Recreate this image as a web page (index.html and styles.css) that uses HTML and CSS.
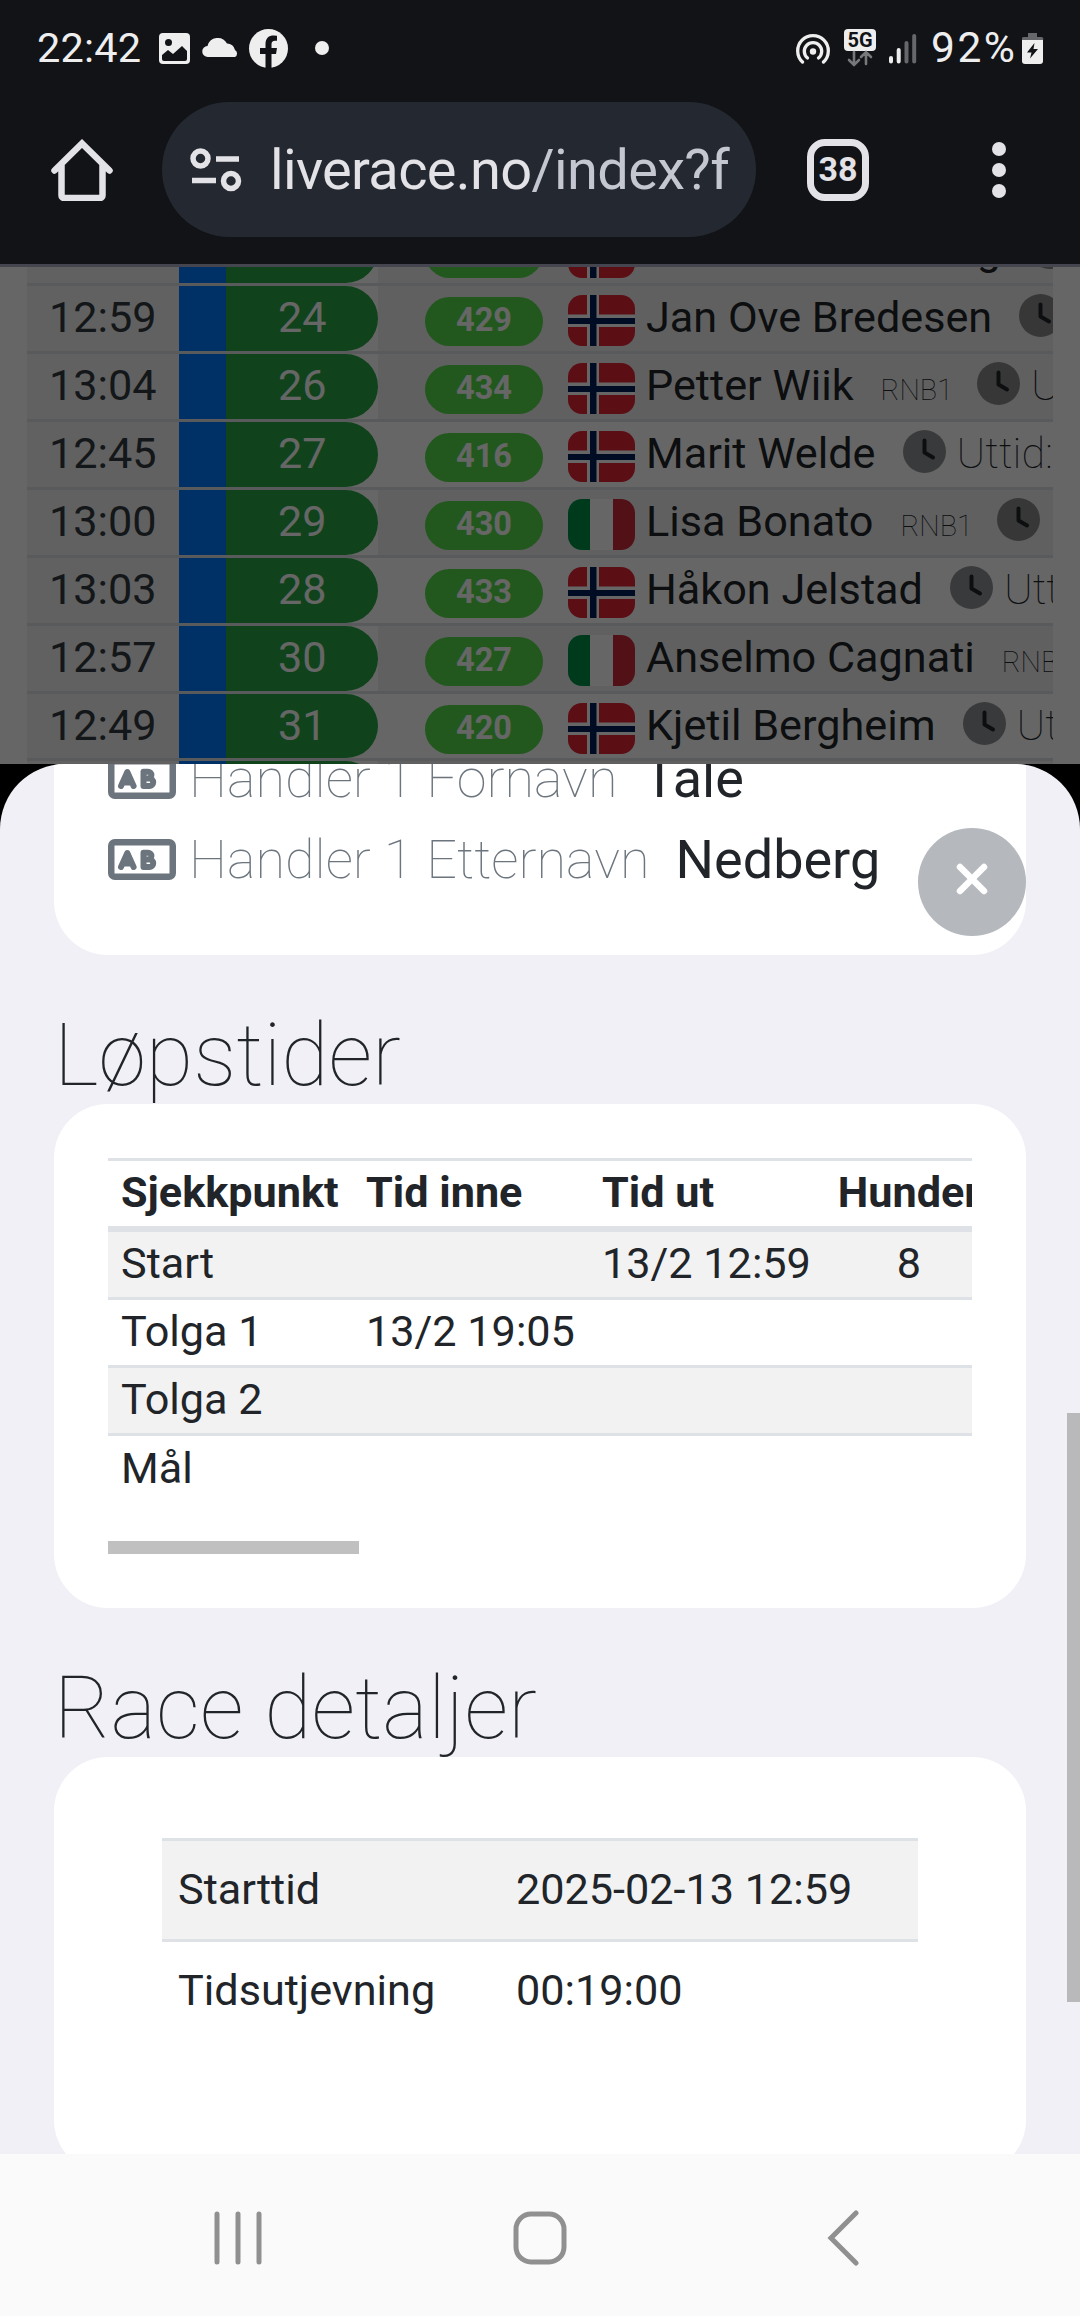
FILE: index.html
```html
<!DOCTYPE html>
<html lang="no">

<head>
    <meta charset="UTF-8">
    <meta name="viewport" content="width=device-width, initial-scale=1.0">
    <title>liverace.no</title>
    <link rel="stylesheet" href="styles.css">
</head>

<body>
    <!-- shared symbols -->
    <svg class="defs" width="0" height="0">
        <symbol id="no" viewBox="0 0 67 51">
            <path fill="#e32636" d="M0 0h67v51H0z" />
            <path fill="#fff" d="M19 0h12v51H19zM0 19.500h67v12.500H0z" />
            <path fill="#00205b" d="M22 0h6.500v51H22zM0 23h67v6H0z" />
        </symbol>
        <symbol id="it" viewBox="0 0 67 51">
            <path fill="#fff" d="M0 0h67v51H0z" />
            <path fill="#009246" d="M0 0h22v51H0z" />
            <path fill="#ce2b37" d="M45 0h22v51H45z" />
        </symbol>
        <symbol id="clock" viewBox="0 0 43 43">
            <circle cx="21.500" cy="21.500" r="21.500" fill="#212529" fill-opacity=".5" />
            <path d="M21.500 10.500V22.500L30 27.500" fill="none" stroke="#212529" stroke-width="4" stroke-linecap="round" stroke-linejoin="round" />
        </symbol>
        <symbol id="ab" viewBox="0 0 68 41">
            <rect x="3.250" y="3.250" width="61.500" height="34.500" rx="3.500" fill="none" stroke="#6c757d" stroke-width="6.500" />
            <path d="M13 28L19.300 14L25.600 28M15.500 24.500h8" fill="none" stroke="#6c757d" stroke-width="6" stroke-linecap="round" stroke-linejoin="round" />
            <path d="M35.500 13.700h4.500a3.300 3.300 0 0 1 0 6.800H35.500zM35.500 20.500h6a3.700 3.700 0 0 1 0 7.400H35.500z" fill="none" stroke="#6c757d" stroke-width="6" stroke-linejoin="round" />
        </symbol>
    </svg>

    <header class="browser">
        <div class="status">
            <span class="clock">22:42</span>
            <svg class="status-left" width="180" height="42" viewBox="0 0 180 42">
                <rect x="9" y="6" width="31" height="31" rx="4" fill="#eee" />
                <circle cx="18.500" cy="15.500" r="3.500" fill="#121317" />
                <path d="M12 28l6-5 5 4 9-8 5 5v8a2 2 0 0 1-2 2H14a2 2 0 0 1-2-2z" fill="#121317" />
                <path d="M58 30a5.500 5.500 0 0 1-.5-11 10.500 10.500 0 0 1 19.500-2.500 8 8 0 0 1 8 6.500 4 4 0 0 1 0 7z" fill="#eee" />
                <circle cx="118.500" cy="21.500" r="19.500" fill="#eee" />
                <path d="M115.500 42V27h-5.500v-6h5.500v-4c0-6 3.500-8.500 8-8.500l3.500.3v5h-2c-2.500 0-3.500 1.300-3.500 3.500V21h5.500l-1 6h-4.500v15z" fill="#121317" />
                <circle cx="172" cy="21" r="7" fill="#eee" />
            </svg>
            <svg class="status-right" width="130" height="42" viewBox="0 0 130 42">
                <g fill="none" stroke="#eee" stroke-width="3.300" stroke-linecap="round">
                    <path d="M6.500 35a15.300 15.300 0 1 1 21 0" />
                    <path d="M11.500 31a8.700 8.700 0 1 1 11 0" />
                </g>
                <circle cx="17" cy="24.500" r="3.200" fill="#eee" />
                <rect x="48" y="2" width="32" height="22" rx="4" fill="#eee" />
                <text class="net" x="64" y="20" text-anchor="middle">5G</text>
                <path d="M58 25v13m-5-5l5 5 5-5M70 37V25m-5 5l5-5 5 5" fill="none" stroke="#77787a" stroke-width="2.600" stroke-linecap="round" />
                <g stroke-width="4" stroke-linecap="round">
                    <path d="M95 31v3.500M102.700 23v11.500" stroke="#eee" />
                    <path d="M110.500 16v18.500M118.200 9v25.500" stroke="#66676a" />
                </g>
            </svg>
            <span class="percent">92%</span>
            <svg class="battery" width="22" height="42" viewBox="0 0 22 42">
                <path d="M6 6h9v4h4a2 2 0 0 1 2 3H0a2 2 0 0 1 2-3h4z" fill="#66676a" />
                <path d="M0 13h21v21a3 3 0 0 1-3 3H3a3 3 0 0 1-3-3z" fill="#eee" />
                <path d="M12.500 16L5 25.500h4.500L8 31.500l8-9.500h-4.500z" fill="#121317" />
            </svg>
        </div>
        <div class="toolbar">
            <svg class="home" width="62" height="62" viewBox="0 0 62 62">
                <path d="M3.500 31.500L31 4.500l27.500 27M10.500 26v30.500a2.500 2.500 0 0 0 2.500 2.500h36a2.500 2.500 0 0 0 2.500-2.500V26" fill="none" stroke="#e3e2e6" stroke-width="6.500" stroke-linecap="round" />
            </svg>
            <div class="address">
                <svg width="52" height="44" viewBox="0 0 52 44">
                    <g fill="none" stroke="#e3e2e6" stroke-width="5.500">
                        <circle cx="10.500" cy="10.500" r="7.500" />
                        <circle cx="41" cy="33" r="7.500" />
                        <path d="M26 11h23M2 32.500h24" />
                    </g>
                </svg>
                <span class="url">liverace.no<span class="path">/index?f</span></span>
            </div>
            <span class="tabs">38</span>
            <svg class="more" width="14" height="56" viewBox="0 0 14 56">
                <g fill="#e3e2e6">
                    <circle cx="7" cy="7" r="7" />
                    <circle cx="7" cy="28" r="7" />
                    <circle cx="7" cy="49" r="7" />
                </g>
            </svg>
        </div>
    </header>

    <main class="page">
        <div class="list">
            <div class="row cut odd">
                <span class="time"></span><span class="pos"></span><span class="bib"></span>
                <svg class="flag"><use href="#no" /></svg>
                <span class="name">Reidar Andersberg</span>
                <svg class="ico"><use href="#clock" /></svg>
            </div>
            <div class="row odd">
                <span class="time">12:59</span><span class="pos">24</span><span class="bib">429</span>
                <svg class="flag"><use href="#no" /></svg>
                <span class="name">Jan Ove Bredesen</span>
                <svg class="ico"><use href="#clock" /></svg>
            </div>
            <div class="row odd">
                <span class="time">13:04</span><span class="pos">26</span><span class="bib">434</span>
                <svg class="flag"><use href="#no" /></svg>
                <span class="name">Petter Wiik</span>
                <span class="class">RNB1</span>
                <svg class="ico"><use href="#clock" /></svg>
                <span class="out">Uttid:</span>
            </div>
            <div class="row">
                <span class="time">12:45</span><span class="pos">27</span><span class="bib">416</span>
                <svg class="flag"><use href="#no" /></svg>
                <span class="name">Marit Welde</span>
                <svg class="ico"><use href="#clock" /></svg>
                <span class="out">Uttid:</span>
            </div>
            <div class="row odd">
                <span class="time">13:00</span><span class="pos">29</span><span class="bib">430</span>
                <svg class="flag"><use href="#it" /></svg>
                <span class="name">Lisa Bonato</span>
                <span class="class">RNB1</span>
                <svg class="ico"><use href="#clock" /></svg>
            </div>
            <div class="row">
                <span class="time">13:03</span><span class="pos">28</span><span class="bib">433</span>
                <svg class="flag"><use href="#no" /></svg>
                <span class="name">Håkon Jelstad</span>
                <svg class="ico"><use href="#clock" /></svg>
                <span class="out">Uttid:</span>
            </div>
            <div class="row odd">
                <span class="time">12:57</span><span class="pos">30</span><span class="bib">427</span>
                <svg class="flag"><use href="#it" /></svg>
                <span class="name">Anselmo Cagnati</span>
                <span class="class">RNB1</span>
            </div>
            <div class="row">
                <span class="time">12:49</span><span class="pos">31</span><span class="bib">420</span>
                <svg class="flag"><use href="#no" /></svg>
                <span class="name">Kjetil Bergheim</span>
                <svg class="ico"><use href="#clock" /></svg>
                <span class="out">Uttid:</span>
            </div>
            <div class="row odd">
                <span class="time"></span><span class="pos"></span>
            </div>
        </div>
        <div class="backdrop"></div>
    </main>

    <section class="sheet-wrap">
        <div class="sheet">
            <div class="card info">
                <p class="field"><svg class="ab"><use href="#ab" /></svg><span class="label">Handler 1 Fornavn</span><span class="value">Tale</span></p>
                <p class="field"><svg class="ab"><use href="#ab" /></svg><span class="label">Handler 1 Etternavn</span><span class="value">Nedberg</span></p>
            </div>

            <h2>Løpstider</h2>
            <div class="card times">
                <div class="scroll-x">
                    <table class="splits">
                        <colgroup>
                            <col class="c1">
                            <col class="c2">
                            <col class="c3">
                            <col class="c4">
                        </colgroup>
                        <thead>
                            <tr><th>Sjekkpunkt</th><th>Tid inne</th><th>Tid ut</th><th class="dogs">Hunder</th></tr>
                        </thead>
                        <tbody>
                            <tr><td>Start</td><td></td><td>13/2 12:59</td><td class="dogs">8</td></tr>
                            <tr><td>Tolga 1</td><td>13/2 19:05</td><td></td><td></td></tr>
                            <tr><td>Tolga 2</td><td></td><td></td><td></td></tr>
                            <tr><td>Mål</td><td></td><td></td><td></td></tr>
                        </tbody>
                    </table>
                </div>
                <div class="thumb-x"></div>
            </div>

            <h2>Race detaljer</h2>
            <div class="card details">
                <div class="detail shade"><span>Starttid</span><span>2025-02-13 12:59</span></div>
                <div class="detail"><span>Tidsutjevning</span><span>00:19:00</span></div>
            </div>
        </div>

        <button class="close" aria-label="Lukk">
            <svg width="32" height="32" viewBox="0 0 32 32">
                <path d="M4 4l24 24M28 4L4 28" stroke="#fff" stroke-width="6.500" stroke-linecap="round" />
            </svg>
        </button>
        <div class="thumb-y"></div>
    </section>

    <nav class="navbar">
        <svg width="50" height="56" viewBox="0 0 50 56">
            <path d="M3 4v48M24 4v48M45 4v48" stroke="#909090" stroke-width="5" stroke-linecap="round" />
        </svg>
        <svg class="nav-home" width="54" height="56" viewBox="0 0 54 56">
            <rect x="3" y="4" width="48" height="48" rx="15" fill="none" stroke="#909090" stroke-width="5" />
        </svg>
        <svg width="34" height="56" viewBox="0 0 34 56">
            <path d="M30 3L5 28l25 25" fill="none" stroke="#909090" stroke-width="5" stroke-linecap="round" />
        </svg>
    </nav>
</body>

</html>
```
FILE: styles.css
```css
* {
    box-sizing: border-box;
}

body {
    margin: 0;
    width: 1080px;
    height: 2316px;
    overflow: hidden;
    display: flex;
    flex-direction: column;
    background: #000;
    color: #212529;
    font-family: Roboto, sans-serif;
    font-size: 43.2px;
}

svg {
    display: block;
    flex: none;
}

.defs {
    display: none;
}

/* browser chrome */
.browser {
    height: 267px;
    flex: none;
    background: #121317;
    border-bottom: 3px solid #44454f;
}

.status {
    display: flex;
    height: 102px;
    padding: 27px 36px 0 37px;
    color: #eee;
    line-height: 42px;
}

.clock {
    width: 113px;
    font-size: 41.5px;
    letter-spacing: .2px;
}

.status-right {
    margin-left: auto;
}

.net {
    font-size: 20px;
    font-weight: 700;
    fill: #121317;
}

.percent {
    width: 96px;
    padding-left: 5px;
    font-size: 42.5px;
    letter-spacing: 2.5px;
}

.toolbar {
    display: flex;
    align-items: center;
    height: 135px;
    padding: 0 74px 0 51px;
}

.address {
    display: flex;
    align-items: center;
    width: 594px;
    height: 135px;
    margin-left: 49px;
    padding-left: 28px;
    border-radius: 68px;
    background: #242830;
    white-space: nowrap;
}

.url {
    padding-left: 28px;
    font-size: 56px;
    letter-spacing: -.65px;
    color: #e3e2e6;
}

.path {
    color: #c4c7d0;
}

.tabs {
    width: 62px;
    height: 62px;
    margin-left: 51px;
    border: 7px solid #e3e2e6;
    border-radius: 18px;
    color: #e3e2e6;
    font-size: 34px;
    font-weight: 700;
    line-height: 46px;
    text-align: center;
}

.more {
    margin-left: auto;
}

/* start list behind the sheet */
.page {
    position: relative;
    height: 497px;
    flex: none;
    overflow: hidden;
    background: #fff;
}

.list {
    width: 1026px;
    margin-left: 27px;
    overflow: hidden;
}

.row {
    display: flex;
    height: 67.900px;
    border-bottom: 3px solid #dee2e6;
    white-space: nowrap;
    line-height: 63px;
}

.row.cut {
    margin-top: -48.700px;
}

.row > * {
    flex: none;
}

.odd {
    background: linear-gradient(to right, transparent 351px, #f0f0f0 351px);
}

.time {
    width: 152px;
    padding-left: 22px;
    background: #f2f2f2;
    color: #343a40;
}

.pos {
    width: 199px;
    padding-left: 52px;
    border-left: 47px solid #007bff;
    border-radius: 0 33px 33px 0;
    background: #28a745;
    color: #fff;
}

.bib {
    width: 118px;
    height: 49px;
    margin: 11px 0 0 47px;
    border-radius: 25px;
    background: #55dd4b;
    color: #fff;
    font-size: 32.500px;
    font-weight: 700;
    line-height: 47px;
    text-align: center;
}

.flag {
    width: 67px;
    height: 51px;
    margin: 9px 11px 0 25px;
    border-radius: 14px;
}

.class {
    margin: 0 -3px 0 27px;
    font-size: 28.800px;
    font-weight: 100;
    line-height: 72px;
}

.ico {
    width: 43px;
    height: 43px;
    margin: 8px 0 0 27px;
}

.out {
    margin-left: 11px;
    font-weight: 100;
}

.backdrop {
    position: absolute;
    inset: 0;
    background: rgba(0, 0, 0, .6);
}

/* bottom sheet */
.sheet-wrap {
    position: relative;
    height: 1390px;
    flex: none;
}

.sheet {
    height: 100%;
    padding: 0 54px;
    overflow: hidden;
    border-radius: 65px 65px 0 0;
    background: #f1f0f6;
}

.card {
    border-radius: 54px;
    background: #fff;
}

.info {
    height: 191px;
    padding: 0 54px;
    border-radius: 0 0 54px 54px;
}

.field {
    display: flex;
    align-items: center;
    height: 81px;
    margin: 0;
    font-size: 54px;
    white-space: nowrap;
}

.field:first-child {
    height: 55px;
    padding-bottom: 26px;
}

.ab {
    width: 68px;
    height: 41px;
}

.label {
    margin-left: 13px;
    color: #6c757d;
    font-weight: 100;
}

.value {
    margin-left: 26px;
}

h2 {
    height: 149px;
    margin: 0;
    padding-top: 49px;
    font-size: 86.400px;
    font-weight: 100;
    line-height: 104px;
}

.times {
    height: 504px;
    padding: 54px;
}

.scroll-x {
    height: 383px;
    overflow: hidden;
}

.splits {
    width: 1060px;
    border-collapse: collapse;
    table-layout: fixed;
}

.c1 {
    width: 245px;
}

.c2 {
    width: 236px;
}

.c3 {
    width: 235px;
}

.splits th,
.splits td {
    height: 68px;
    padding: 0 0 2px 13px;
    border-top: 3px solid #dee2e6;
    line-height: 63px;
    text-align: left;
    white-space: nowrap;
}

.splits thead th {
    border-bottom: 6px solid #dee2e6;
}

.splits tbody tr:nth-child(odd) {
    background: #f2f2f2;
}

.splits .dogs {
    width: 344px;
    padding: 0 174px 2px 0;
    text-align: center;
}

.thumb-x {
    width: 251px;
    height: 13px;
    background: #c0c0c0;
}

.details {
    height: 417px;
    padding: 81px 108px;
}

.detail {
    display: flex;
    height: 101px;
    padding-left: 16px;
    border-top: 3px solid #dee2e6;
    line-height: 97px;
}

.detail span:first-child {
    width: 338px;
}

.shade {
    background: #f2f2f2;
}

.close {
    position: absolute;
    top: 64px;
    right: 54px;
    display: flex;
    justify-content: center;
    width: 108px;
    height: 108px;
    padding: 35px 0 0;
    border: 0;
    border-radius: 50%;
    background: #b5b8bd;
}

.thumb-y {
    position: absolute;
    top: 649px;
    right: 0;
    width: 13px;
    height: 589px;
    background: #b9b9bc;
}

/* android buttons */
.navbar {
    display: flex;
    justify-content: space-between;
    height: 162px;
    flex: none;
    padding: 56px 220px 0 214px;
    background: #fafafa;
}

.nav-home {
    margin: 0 5px 0 -5px;
}
```
